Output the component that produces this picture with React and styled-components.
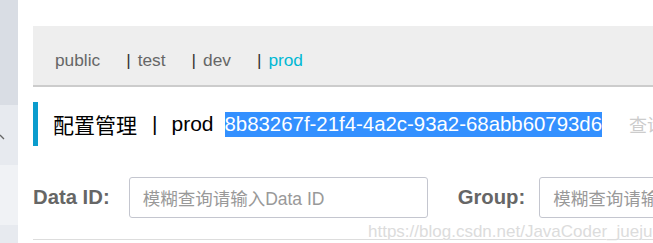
import React from "react";
import styled, { createGlobalStyle } from "styled-components";

const Global = createGlobalStyle`
  html, body { margin: 0; padding: 0; background: #fff; overflow: hidden; }
  body { font-family: "Liberation Sans", "Noto Sans CJK SC", sans-serif; width: 653px; height: 243px; }
`;

const Page = styled.div`
  display: flex;
  width: 653px;
  height: 243px;
  overflow: hidden;
  position: relative;
`;

const Sidebar = styled.div`
  width: 18px;
  flex-shrink: 0;
  display: flex;
  flex-direction: column;
`;

const SideBlock = styled.div`
  height: ${(p) => p.$h}px;
  background: ${(p) => p.$bg};
  position: relative;
  flex-shrink: 0;
`;

const Chevron = styled.svg`
  position: absolute;
  left: 0;
  top: 29px;
`;

const Main = styled.div`
  flex: 1;
  min-width: 0;
  padding: 26px 0 0 15px;
  overflow: hidden;
`;

const TabBar = styled.div`
  height: 61px;
  background: #eeeeee;
  border-bottom: 2px solid #cccccc;
  display: flex;
  align-items: center;
  gap: 26px;
  padding: 10px 0 0 22px;
  box-sizing: border-box;
  font-size: 17.3px;
`;

const Tab = styled.span`
  color: ${(p) => (p.$active ? "#00b8d4" : "#666666")};
  white-space: nowrap;
`;

const Pipe = styled.span`
  color: #333333;
  margin-right: 7px;
`;

const TitleRow = styled.div`
  margin-top: 15px;
  height: 44px;
  border-left: 5px solid #0b9ccd;
  padding-left: 15px;
  display: flex;
  align-items: center;
  font-size: 21px;
  color: #000;
  white-space: nowrap;
`;

const TitleSep = styled.span`
  margin: 0 14px 0 15px;
`;

const Selected = styled.span`
  background: #3390ff;
  color: #fff;
  margin-left: 11px;
  padding: 1px 0 2px;
  line-height: 22px;
  font-size: 20.4px;
`;

const QueryLink = styled.span`
  color: #cccccc;
  font-size: 18px;
  margin-left: 27px;
`;

const FilterRow = styled.div`
  margin-top: 31px;
  display: flex;
  align-items: center;
  height: 41px;
  white-space: nowrap;
`;

const Label = styled.span`
  font-weight: bold;
  color: #666666;
  font-size: 20.3px;
  flex-shrink: 0;
  margin-left: ${(p) => p.$ml || 0}px;
  margin-right: ${(p) => p.$mr || 19}px;
`;

const Input = styled.div`
  width: ${(p) => p.$w}px;
  height: 41px;
  box-sizing: border-box;
  border: 1px solid #c4c6cf;
  border-radius: 3px;
  flex-shrink: 0;
  display: flex;
  align-items: center;
  padding-left: 13px;
  color: #999999;
  font-size: 17.5px;
`;

const Divider = styled.div`
  margin-top: 21px;
  border-top: 1px solid #dddddd;
`;

const Watermark = styled.div`
  position: absolute;
  left: 368px;
  top: 222px;
  font-size: 17px;
  color: #dcdcdc;
  text-shadow: 0 0 1px #fff, 0 0 1px #fff;
  white-space: nowrap;
  pointer-events: none;
`;

export default function App() {
  return (
    <>
      <Global />
      <Page>
        <Sidebar>
          <SideBlock $h={105} $bg="#d9dde4" />
          <SideBlock $h={60} $bg="#e7eaef">
            <Chevron width="5" height="6" viewBox="0 0 5 6">
              <path d="M0 1 L4 5" stroke="#666" strokeWidth="1.3" fill="none" />
            </Chevron>
          </SideBlock>
          <SideBlock $h={60} $bg="#f0f2f5" />
          <SideBlock $h={18} $bg="#e7eaef" />
        </Sidebar>
        <Main>
          <TabBar>
            <Tab>public</Tab>
            <Tab><Pipe>|</Pipe>test</Tab>
            <Tab><Pipe>|</Pipe>dev</Tab>
            <Tab $active><Pipe>|</Pipe>prod</Tab>
          </TabBar>
          <TitleRow>
            配置管理<TitleSep>|</TitleSep>prod
            <Selected>8b83267f-21f4-4a2c-93a2-68abb60793d6</Selected>
            <QueryLink>查询</QueryLink>
          </TitleRow>
          <FilterRow>
            <Label>Data ID:</Label>
            <Input $w={299}>模糊查询请输入Data ID</Input>
            <Label $ml={30} $mr={14}>Group:</Label>
            <Input $w={200}>模糊查询请输入Group</Input>
          </FilterRow>
          <Divider />
        </Main>
        <Watermark>https://blog.csdn.net/JavaCoder_juejue</Watermark>
      </Page>
    </>
  );
}
